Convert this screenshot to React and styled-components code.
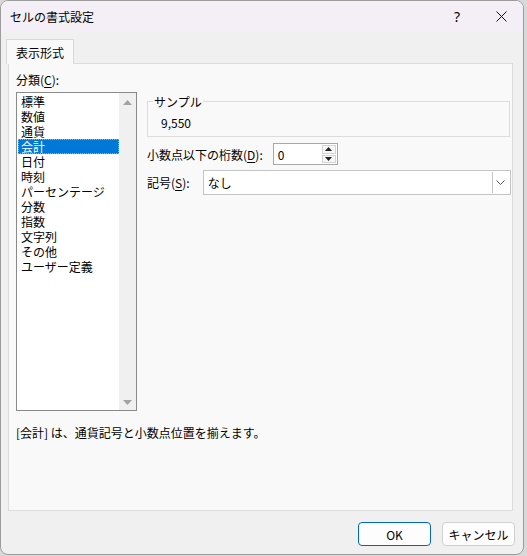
import React from 'react';
import styled, { createGlobalStyle } from 'styled-components';

const GlobalStyle = createGlobalStyle`
  html, body {
    margin: 0;
    padding: 0;
    background: #d9d9d9;
  }
  body {
    font-family: "Noto Sans CJK JP", "Noto Sans", sans-serif;
    font-size: 12px;
    color: #000;
  }
`;

const Window = styled.div`
  box-sizing: border-box;
  width: 524px;
  height: 555px;
  border: 1px solid #9c9c9c;
  border-radius: 8px;
  background: #f0f0f0;
  overflow: hidden;
  display: flex;
  flex-direction: column;
`;

const TitleBar = styled.div`
  height: 30px;
  flex: none;
  background: #f4eff7;
  display: flex;
  align-items: center;
  padding-left: 9px;
`;

const Title = styled.div`
  flex: 1;
  font-size: 12px;
  line-height: 15px;
  padding-top: 1px;
`;

const CaptionButton = styled.div`
  width: 44px;
  height: 30px;
  display: flex;
  align-items: center;
  justify-content: center;
  font-family: "Noto Sans", sans-serif;
  font-size: 14px;
`;

const Body = styled.div`
  flex: 1;
  display: flex;
  flex-direction: column;
  padding-top: 8px;
`;

const TabStrip = styled.div`
  display: flex;
  padding-left: 5px;
  position: relative;
  z-index: 1;
  margin-bottom: -1px;
`;

const Tab = styled.div`
  box-sizing: border-box;
  width: 68px;
  height: 25px;
  border: 1px solid #d9d9d9;
  border-bottom: none;
  background: #f9f9f9;
  display: flex;
  align-items: center;
  justify-content: center;
  line-height: 15px;
`;

const Panel = styled.div`
  box-sizing: border-box;
  height: 448px;
  margin: 0 10px 0 7px;
  border: 1px solid #dcdcdc;
  background: #f9f9f9;
  padding: 8px 0 0 7px;
  display: flex;
  flex-direction: column;
`;

const Columns = styled.div`
  display: flex;
  gap: 10px;
  align-items: flex-start;
`;

const LeftColumn = styled.div`
  width: 121px;
  display: flex;
  flex-direction: column;
`;

const Label = styled.div`
  line-height: 15px;
  white-space: nowrap;
`;

const Key = styled.span`
  text-decoration: underline;
  text-underline-offset: 2px;
`;

const ListBox = styled.div`
  box-sizing: border-box;
  margin-top: 5px;
  height: 319px;
  border: 1px solid #8a8a8a;
  background: #fff;
  display: flex;
`;

const Items = styled.div`
  flex: 1;
  padding: 1px 0 0 1px;
`;

const Item = styled.div`
  box-sizing: border-box;
  height: 15px;
  line-height: 13px;
  padding-left: 2px;
  white-space: nowrap;
  border: 1px solid transparent;
  overflow: hidden;
  ${p => p.$selected && `
    background: #0078d7;
    color: #fff;
    border: 1px dotted #f5a623;
  `}
`;

const ScrollBar = styled.div`
  width: 17px;
  background: #f0f0f0;
  display: flex;
  flex-direction: column;
  justify-content: space-between;
  align-items: center;
  padding: 7px 0 5px;
`;

const RightColumn = styled.div`
  width: 364px;
  padding-top: 22px;
  display: flex;
  flex-direction: column;
`;

const SampleGroup = styled.fieldset`
  margin: 0;
  width: 363px;
  box-sizing: border-box;
  border: 1px solid #dcdcdc;
  padding: 0 0 6px 5px;
  min-width: 0;
`;

const Legend = styled.legend`
  padding: 0 1px;
  line-height: 15px;
`;

const SampleValue = styled.div`
  line-height: 15px;
  margin-top: 6px;
  padding-left: 8px;
`;

const FieldRow = styled.div`
  display: flex;
  align-items: center;
  margin-top: ${p => p.$top}px;
`;

const SpinBox = styled.div`
  box-sizing: border-box;
  width: 65px;
  height: 22px;
  margin-left: 10px;
  border: 1px solid #a8a8a8;
  background: #fff;
  display: flex;
  align-items: center;
  padding: 1px 1px 1px 4px;
`;

const SpinValue = styled.div`
  flex: 1;
  line-height: 15px;
`;

const SpinButtons = styled.div`
  width: 14px;
  height: 18px;
  display: flex;
  flex-direction: column;
  gap: 1px;
`;

const SpinButton = styled.div`
  flex: 1;
  border: 1px solid #d4d4d4;
  background: #f7f7f7;
  display: flex;
  align-items: center;
  justify-content: center;
`;

const Select = styled.div`
  box-sizing: border-box;
  width: 308px;
  height: 25px;
  margin-left: 13px;
  border: 1px solid #c4c4c4;
  background: #fff;
  display: flex;
  align-items: center;
  padding: 1px 1px 1px 4px;
`;

const SelectValue = styled.div`
  flex: 1;
  line-height: 15px;
`;

const DropButton = styled.div`
  box-sizing: border-box;
  width: 17px;
  height: 21px;
  border-left: 1px solid #c4c4c4;
  display: flex;
  align-items: center;
  justify-content: center;
`;

const Description = styled.div`
  margin-top: 14px;
  line-height: 15px;
`;

const ButtonRow = styled.div`
  display: flex;
  justify-content: flex-end;
  gap: 11px;
  padding: 11px 8px 0 0;
`;

const Button = styled.div`
  box-sizing: border-box;
  width: 73px;
  height: 24px;
  border-radius: 4px;
  background: #fdfdfd;
  border: 1px solid ${p => (p.$primary ? '#0067c0' : '#d0d0d0')};
  display: flex;
  align-items: center;
  justify-content: center;
  line-height: 15px;
`;

const Triangle = ({ up, color = '#a3a3a3', w = 9, h = 5 }) => (
  <svg width={w} height={h} viewBox={`0 0 ${w} ${h}`}>
    <polygon
      points={up ? `0,${h} ${w / 2},0 ${w},${h}` : `0,0 ${w / 2},${h} ${w},0`}
      fill={color}
    />
  </svg>
);

const categories = [
  '標準', '数値', '通貨', '会計', '日付', '時刻', 'パーセンテージ',
  '分数', '指数', '文字列', 'その他', 'ユーザー定義'
];

export default function App() {
  return (
    <>
      <GlobalStyle />
      <Window>
        <TitleBar>
          <Title>セルの書式設定</Title>
          <CaptionButton>?</CaptionButton>
          <CaptionButton>
            <svg width="11" height="11" viewBox="0 0 11 11">
              <path d="M0.5 0.5 L10.5 10.5 M10.5 0.5 L0.5 10.5" stroke="#111" strokeWidth="1" />
            </svg>
          </CaptionButton>
        </TitleBar>
        <Body>
          <TabStrip>
            <Tab>表示形式</Tab>
          </TabStrip>
          <Panel>
            <Columns>
              <LeftColumn>
                <Label>分類(<Key>C</Key>):</Label>
                <ListBox>
                  <Items>
                    {categories.map(c => (
                      <Item key={c} $selected={c === '会計'}>{c}</Item>
                    ))}
                  </Items>
                  <ScrollBar>
                    <Triangle up />
                    <Triangle />
                  </ScrollBar>
                </ListBox>
              </LeftColumn>
              <RightColumn>
                <SampleGroup>
                  <Legend>サンプル</Legend>
                  <SampleValue>9,550</SampleValue>
                </SampleGroup>
                <FieldRow $top={6}>
                  <Label>小数点以下の桁数(<Key>D</Key>):</Label>
                  <SpinBox>
                    <SpinValue>0</SpinValue>
                    <SpinButtons>
                      <SpinButton><Triangle up color="#222" w={7} h={4} /></SpinButton>
                      <SpinButton><Triangle color="#222" w={7} h={4} /></SpinButton>
                    </SpinButtons>
                  </SpinBox>
                </FieldRow>
                <FieldRow $top={5}>
                  <Label>記号(<Key>S</Key>):</Label>
                  <Select>
                    <SelectValue>なし</SelectValue>
                    <DropButton>
                      <svg width="9" height="5" viewBox="0 0 9 5">
                        <path d="M0.5 0.5 L4.5 4.5 L8.5 0.5" fill="none" stroke="#555" strokeWidth="1" />
                      </svg>
                    </DropButton>
                  </Select>
                </FieldRow>
              </RightColumn>
            </Columns>
            <Description>[会計] は、通貨記号と小数点位置を揃えます。</Description>
          </Panel>
          <ButtonRow>
            <Button $primary>OK</Button>
            <Button>キャンセル</Button>
          </ButtonRow>
        </Body>
      </Window>
    </>
  );
}
